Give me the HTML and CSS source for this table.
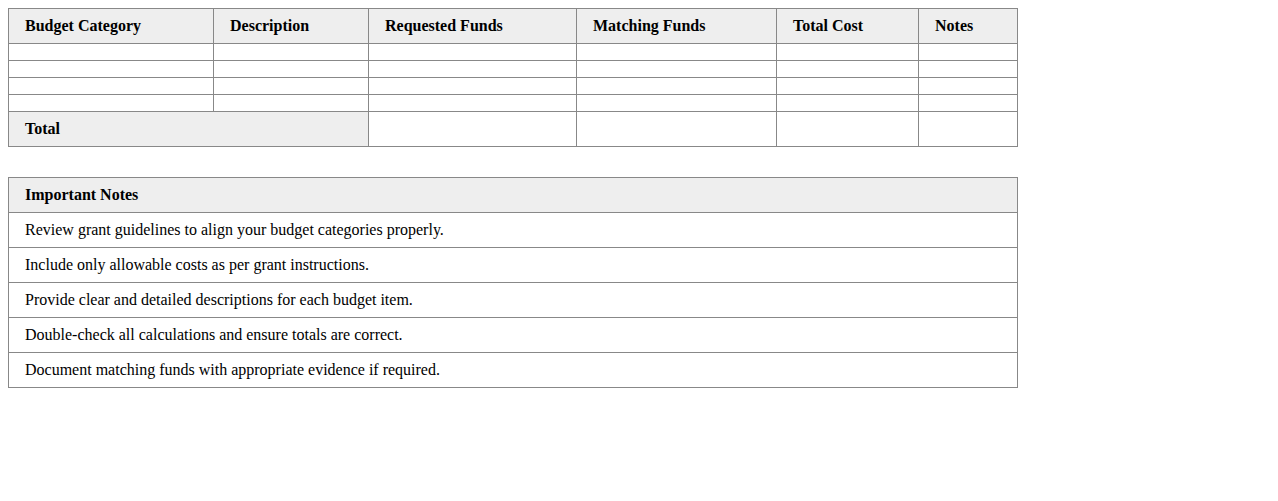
FILE: index.html
```html
<!DOCTYPE html>
<html>
<head>
<meta charset="utf-8">
<link rel="stylesheet" href="styles.css">
</head>
<body>
<table class="grid budget">
  <colgroup>
    <col class="c1"><col class="c2"><col class="c3"><col class="c4"><col class="c5"><col class="c6">
  </colgroup>
  <thead>
    <tr>
      <th>Budget Category</th>
      <th>Description</th>
      <th>Requested Funds</th>
      <th>Matching Funds</th>
      <th>Total Cost</th>
      <th>Notes</th>
    </tr>
  </thead>
  <tbody>
    <tr class="empty"><td></td><td></td><td></td><td></td><td></td><td></td></tr>
    <tr class="empty"><td></td><td></td><td></td><td></td><td></td><td></td></tr>
    <tr class="empty"><td></td><td></td><td></td><td></td><td></td><td></td></tr>
    <tr class="empty"><td></td><td></td><td></td><td></td><td></td><td></td></tr>
    <tr class="total">
      <th colspan="2">Total</th>
      <td></td><td></td><td></td><td></td>
    </tr>
  </tbody>
</table>

<table class="grid notes">
  <thead>
    <tr><th>Important Notes</th></tr>
  </thead>
  <tbody>
    <tr><td>Review grant guidelines to align your budget categories properly.</td></tr>
    <tr><td>Include only allowable costs as per grant instructions.</td></tr>
    <tr><td>Provide clear and detailed descriptions for each budget item.</td></tr>
    <tr><td>Double-check all calculations and ensure totals are correct.</td></tr>
    <tr><td>Document matching funds with appropriate evidence if required.</td></tr>
  </tbody>
</table>
</body>
</html>
```
FILE: styles.css
```css
body {
  margin: 8px;
  font-family: "Liberation Serif", "Times New Roman", serif;
  color: #000;
  background: #fff;
}
.grid {
  border-collapse: collapse;
  table-layout: fixed;
  width: 1010px;
  font-size: 16px;
}
.grid th,
.grid td {
  border: 1px solid #888;
  padding: 8px 16px;
  text-align: left;
  vertical-align: middle;
  line-height: 18px;
}
.grid th {
  background: #eeeeee;
  font-weight: bold;
}
.c1 { width: 205px; }
.c2 { width: 155px; }
.c3 { width: 208px; }
.c4 { width: 200px; }
.c5 { width: 142px; }
.c6 { width: 99px; }
.budget .empty td {
  height: 0;
  padding: 8px 16px;
  line-height: 0;
  font-size: 0;
}
.notes {
  margin-top: 30px;
}
```
